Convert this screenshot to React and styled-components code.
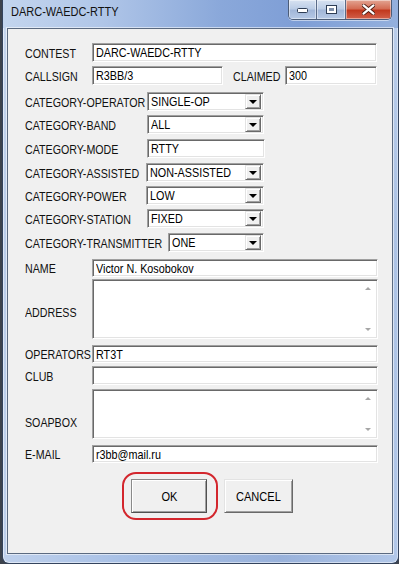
import React from 'react';
import styled, { createGlobalStyle } from 'styled-components';

const GlobalStyle = createGlobalStyle`
  html, body {
    margin: 0;
    padding: 0;
    background: #3d434d;
    overflow: hidden;
  }
`

const Win = styled.div`
  box-sizing: border-box;
  margin-left: 2px;
  width: 397px;
  height: 564px;
  display: flex;
  flex-direction: column;
  border: 1px solid #34445e;
  border-top: none;
  border-radius: 0 0 7px 7px;
  padding: 0 5px 9px 4px;
  background:
    linear-gradient(90deg, rgba(255,255,255,0.25), rgba(255,255,255,0) 30%, rgba(40,70,140,0.12) 70%, rgba(255,255,255,0.1)),
    linear-gradient(180deg, #b4c9e9 0%, #a3bce2 40%, #a9c1e6 100%);
  box-shadow: inset 1px 0 rgba(255,255,255,0.5), inset -1px 0 rgba(255,255,255,0.4), inset 0 -1px rgba(255,255,255,0.5);
  font-family: 'Liberation Sans', Arial, sans-serif;
`

// the dialog uses the old narrow MS Sans Serif look: squeeze Arial metrics
const Narrow = styled.span`
  display: inline-block;
  white-space: nowrap;
  transform: scaleX(${p => p.$sx || 0.82});
  transform-origin: left center;
`

const TitleBar = styled.div`
  height: 28px;
  display: flex;
  align-items: flex-start;
  justify-content: space-between;
  margin: 0 -5px 0 -4px;
  padding: 0 6px 0 8px;
  background: linear-gradient(90deg, #c3d5ee 0%, #b0c6e8 25%, #8aa8da 55%, #7e9ed6 75%, #94b0dd 100%);
`

const Title = styled.div`
  margin-top: 5px;
  font-size: 12.5px;
  color: #111;
`

const Captions = styled.div`
  display: flex;
  height: 19px;
  border: 1px solid #4c5d78;
  border-top: none;
  border-radius: 0 0 5px 5px;
  overflow: hidden;
  box-shadow: 0 1px rgba(255,255,255,0.5);
`

const CapButton = styled.div`
  width: ${p => p.$w}px;
  display: flex;
  align-items: center;
  justify-content: center;
  border-left: ${p => p.$first ? 'none' : '1px solid #5a6b88'};
  background: ${p => p.$close
    ? 'linear-gradient(180deg, #e3a593 0%, #d46d55 45%, #c2391f 55%, #d2604a 100%)'
    : 'linear-gradient(180deg, #d7e2f1 0%, #bccde6 45%, #a2b7d8 55%, #b6c9e6 100%)'};
  box-shadow: inset 0 0 0 1px rgba(255,255,255,0.45);
`

const Client = styled.div`
  flex: 1;
  display: flex;
  flex-direction: column;
  background: #f0f0f0;
  border: 1px solid #5b6a80;
  box-shadow: 0 0 0 1px rgba(255,255,255,0.55);
  padding: 14px 0 0 17px;
`

const Row = styled.div`
  display: flex;
  align-items: center;
  margin-top: ${p => p.$mt || 0}px;
`

const Label = styled.div`
  box-sizing: border-box;
  width: ${p => p.$w}px;
  flex-shrink: 0;
  margin-left: ${p => p.$ml || 0}px;
  padding-top: ${p => 1 + (p.$low || 0) * 2}px;
  font-size: 13px;
  color: #111;
`

const Sunken = styled.div`
  box-sizing: border-box;
  width: ${p => p.$w}px;
  height: ${p => p.$h || 19}px;
  display: flex;
  align-items: ${p => p.$multi ? 'stretch' : 'center'};
  background: #fff;
  border: 1px solid;
  border-color: #a0a0a0 #ffffff #ffffff #a0a0a0;
  box-shadow: inset 1px 1px #696969, inset -1px -1px #e3e3e3;
  padding: 1px 2px 1px 2px;
  font-size: 13px;
  color: #000;
  overflow: hidden;
`

const Value = styled.span`
  flex: 1;
  min-width: 0;
  padding-left: 1px;
`

const DropButton = styled.div`
  box-sizing: border-box;
  width: 16px;
  height: 15px;
  flex-shrink: 0;
  display: flex;
  align-items: center;
  justify-content: center;
  background: #f0f0f0;
  border: 1px solid;
  border-color: #e3e3e3 #696969 #696969 #e3e3e3;
  box-shadow: inset 1px 1px #fff, inset -1px -1px #a0a0a0;
  &::after {
    content: '';
    border-left: 4px solid transparent;
    border-right: 4px solid transparent;
    border-top: 4px solid #000;
    margin-top: 1px;
  }
`

const ScrollBar = styled.div`
  width: 15px;
  display: flex;
  flex-direction: column;
  justify-content: space-between;
  align-items: center;
  padding: 6px 0;
`

const Arrow = styled.span`
  border-left: 3px solid transparent;
  border-right: 3px solid transparent;
  ${p => p.$up ? 'border-bottom: 3px solid #a6a6a6;' : 'border-top: 3px solid #a6a6a6;'}
`

const ButtonRow = styled.div`
  display: flex;
  gap: 17px;
  margin-top: 16px;
  padding-left: 106px;
`

const ButtonWrap = styled.div`
  position: relative;
`

const DlgButton = styled.div`
  box-sizing: border-box;
  width: ${p => p.$w}px;
  height: 34px;
  display: flex;
  align-items: center;
  justify-content: center;
  background: #f0f0f0;
  font-size: 13px;
  color: #000;
  border: 1px solid;
  border-color: ${p => p.$default ? '#8a8a8a #505050 #505050 #8a8a8a' : '#e3e3e3 #696969 #696969 #e3e3e3'};
  box-shadow: inset 1px 1px #fff, inset -1px -1px #a0a0a0;
  & > span {
    transform-origin: center;
  }
`

const Ring = styled.div`
  position: absolute;
  left: -9px;
  top: -7px;
  right: -11px;
  bottom: -7px;
  border: 2px solid #d3262d;
  border-radius: 14px;
  pointer-events: none;
`

function Field({ w, h, children }) {
  return (
    <Sunken $w={w} $h={h}>
      <Value><Narrow $sx={0.83}>{children}</Narrow></Value>
    </Sunken>
  );
}

function Select({ w, children }) {
  return (
    <Sunken $w={w}>
      <Value><Narrow $sx={0.83}>{children}</Narrow></Value>
      <DropButton />
    </Sunken>
  );
}

function Memo({ w, h }) {
  return (
    <Sunken $w={w} $h={h} $multi>
      <Value />
      <ScrollBar>
        <Arrow $up />
        <Arrow />
      </ScrollBar>
    </Sunken>
  );
}

const categories = [
  { label: 'CATEGORY-OPERATOR', value: 'SINGLE-OP', lw: 122, w: 117, mt: 7, drop: true },
  { label: 'CATEGORY-BAND', value: 'ALL', lw: 122, w: 117, mt: 4, drop: true },
  { label: 'CATEGORY-MODE', value: 'RTTY', lw: 122, w: 118, mt: 5 },
  { label: 'CATEGORY-ASSISTED', value: 'NON-ASSISTED', lw: 121, w: 118, mt: 5, drop: true },
  { label: 'CATEGORY-POWER', value: 'LOW', lw: 121, w: 118, mt: 4, drop: true },
  { label: 'CATEGORY-STATION', value: 'FIXED', lw: 122, w: 117, mt: 4, drop: true },
  { label: 'CATEGORY-TRANSMITTER', value: 'ONE', lw: 143, w: 96, mt: 5, drop: true },
];

export default function App() {
  return (
    <>
      <GlobalStyle />
      <Win>
        <TitleBar>
          <Title><Narrow $sx={0.88}>DARC-WAEDC-RTTY</Narrow></Title>
          <Captions>
            <CapButton $w={27} $first>
              <svg width="11" height="6" viewBox="0 0 11 6">
                <rect x="0.5" y="1.5" width="10" height="4" rx="1" fill="#fff" stroke="#2e3d55" />
              </svg>
            </CapButton>
            <CapButton $w={28}>
              <svg width="11" height="9" viewBox="0 0 11 9">
                <rect x="0.5" y="0.5" width="10" height="8" fill="#fff" stroke="#2e3d55" />
                <rect x="3" y="3" width="5" height="3" fill="#7e8ea8" />
              </svg>
            </CapButton>
            <CapButton $w={45} $close>
              <svg width="13" height="11" viewBox="0 0 13 11">
                <path d="M1 1 L12 10 M12 1 L1 10" stroke="#4a1a10" strokeWidth="4" strokeLinecap="round" />
                <path d="M1.5 1.3 L11.5 9.7 M11.5 1.3 L1.5 9.7" stroke="#fff" strokeWidth="2.2" strokeLinecap="round" />
              </svg>
            </CapButton>
          </Captions>
        </TitleBar>
        <Client>
          <Row>
            <Label $w={67}><Narrow>CONTEST</Narrow></Label>
            <Field w={285}>DARC-WAEDC-RTTY</Field>
          </Row>
          <Row $mt={4}>
            <Label $w={67}><Narrow>CALLSIGN</Narrow></Label>
            <Field w={131}>R3BB/3</Field>
            <Label $w={52} $ml={10}><Narrow>CLAIMED</Narrow></Label>
            <Field w={92}>300</Field>
          </Row>
          {categories.map(c => (
            <Row key={c.label} $mt={c.mt}>
              <Label $w={c.lw}><Narrow>{c.label}</Narrow></Label>
              {c.drop ? <Select w={c.w}>{c.value}</Select> : <Field w={c.w}>{c.value}</Field>}
            </Row>
          ))}
          <Row $mt={7}>
            <Label $w={67}><Narrow>NAME</Narrow></Label>
            <Field w={286} h={18}>Victor N. Kosobokov</Field>
          </Row>
          <Row $mt={2}>
            <Label $w={67} $low={3}><Narrow>ADDRESS</Narrow></Label>
            <Memo w={286} h={60} />
          </Row>
          <Row $mt={6}>
            <Label $w={67}><Narrow>OPERATORS</Narrow></Label>
            <Field w={286} h={18}>RT3T</Field>
          </Row>
          <Row $mt={3}>
            <Label $w={67}><Narrow>CLUB</Narrow></Label>
            <Field w={286}>{''}</Field>
          </Row>
          <Row $mt={4}>
            <Label $w={67} $low={8}><Narrow>SOAPBOX</Narrow></Label>
            <Memo w={286} h={50} />
          </Row>
          <Row $mt={6}>
            <Label $w={67}><Narrow>E-MAIL</Narrow></Label>
            <Field w={286} h={18}>r3bb@mail.ru</Field>
          </Row>
          <ButtonRow>
            <ButtonWrap>
              <DlgButton $w={76} $default><Narrow $sx={0.85}>OK</Narrow></DlgButton>
              <Ring />
            </ButtonWrap>
            <DlgButton $w={69}><Narrow $sx={0.85}>CANCEL</Narrow></DlgButton>
          </ButtonRow>
        </Client>
      </Win>
    </>
  );
}
